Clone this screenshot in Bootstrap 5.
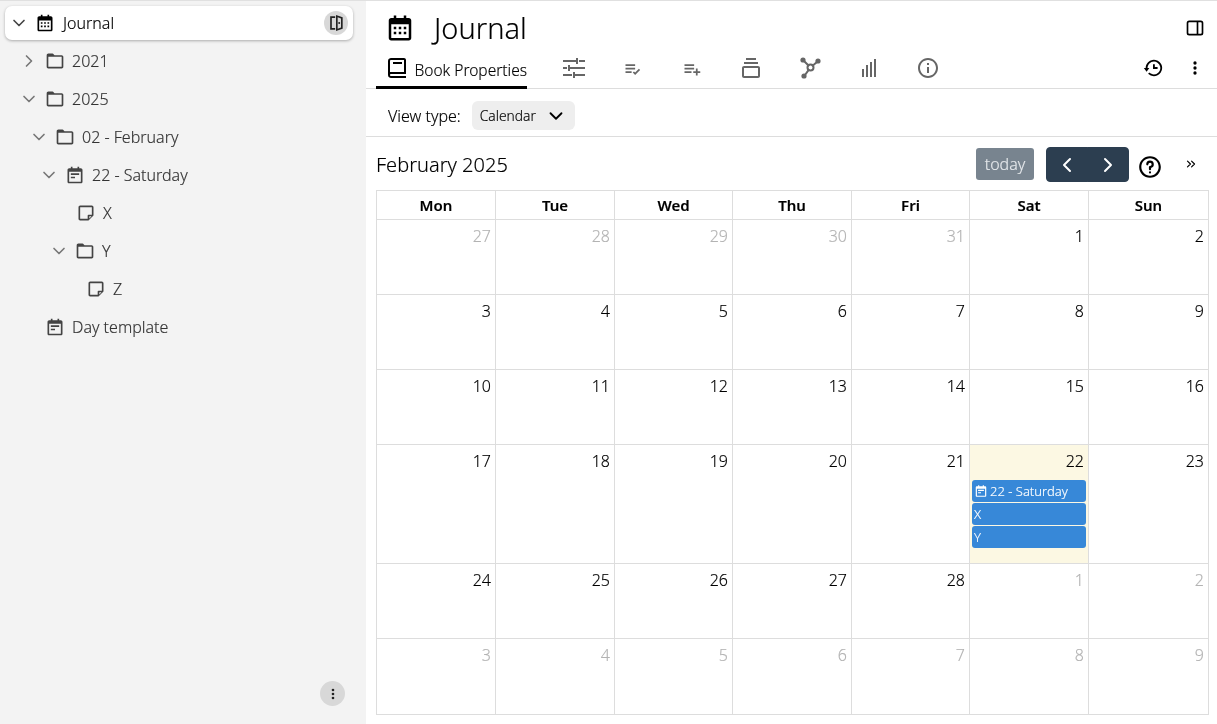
<!DOCTYPE html>
<html lang="en">
<head>
    <meta charset="UTF-8">
    <meta name="viewport" content="width=device-width, initial-scale=1.0">
    <title>Journal</title>
    <link href="https://cdn.jsdelivr.net/npm/bootstrap@5.3.0/dist/css/bootstrap.min.css" rel="stylesheet">
    <style>
        html, body { height: 100%; }
        body {
            font-family: "Noto Sans", sans-serif;
            font-size: 16px;
            font-weight: 300;
            -webkit-text-stroke: .15px;
            color: #000;
            overflow: hidden;
            border-top: 1px solid #e0e0e0;
        }
        .app-shell { will-change: transform; }
        .ico { fill: currentColor; flex: none; display: block; }
        .ico-line { fill: none; stroke: currentColor; stroke-width: 2; stroke-linecap: round; stroke-linejoin: round; }

        /* left tree */
        .side-pane { position: relative; width: 366px; flex: none; background: #f3f3f3; color: #333; padding: 5px 13px 0 5px; }
        .tree-row { height: 38px; }
        .tree-row .ico-chevron { width: 20px; height: 20px; color: #777; }
        .tree-row .ico-node { width: 20px; height: 20px; margin: 0 7px 0 0; color: #444; }
        .tree-root {
            height: 34px; margin-bottom: 2px; background: #fff; color: #000; border-radius: 7px;
            box-shadow: 0 1px 3px rgba(0, 0, 0, .3); padding: 0 5px 0 4px;
        }
        .tree-root .ico-node { width: 20px; height: 20px; margin: 0 8px 0 6px; color: #000; }
        .tree-root .ico-chevron { color: #444; }
        .lvl-1 { padding-left: 14px; }
        .lvl-2 { padding-left: 24px; }
        .lvl-3 { padding-left: 34px; }
        .lvl-4 { padding-left: 44px; }
        .lvl-1 .ico-chevron, .lvl-2 .ico-chevron, .lvl-3 .ico-chevron, .lvl-4 .ico-chevron { margin-right: 6px; }
        .leaf-4 { padding-left: 71px; }
        .leaf-5 { padding-left: 81px; }
        .tmpl-row { padding-left: 40px; }
        .round-btn { width: 24px; height: 24px; border-radius: 50%; background: #d8d8d8; color: #222; }
        .pane-foot { width: 25px; height: 25px; bottom: 18px; right: 21px; }

        /* right side */
        .title-row { height: 47px; padding: 6px 12px 0 19px; }
        .page-title { font-size: 29px; line-height: 1; margin: 0 0 0 19px; font-weight: 300; }
        .tab-row { height: 41px; border-bottom: 1px solid #ddd; padding: 0 12px 0 10px; color: #666; }
        .tab-on {
            height: 41px; color: #000; border-bottom: 3px solid #000; margin-bottom: -1px;
            width: 151px; gap: 6px; justify-content: flex-end; margin-right: 17px;
        }
        .tab-on .ico { margin-top: 2px; }
        .tab-label { margin-top: 7px; font-size: 15.5px; }
        .tab-ico { width: 59px; justify-content: center; }
        .tab-tools { gap: 21px; }
        .prop-row { height: 48px; border-bottom: 1px solid #ddd; padding: 6px 0 0 22px; }
        .view-pick {
            margin-left: 11px; height: 29px; width: 103px; background: #eee; border-radius: 6px;
            font-size: 13.8px; padding: 0 8px;
        }
        .view-pick span { margin-top: 2px; }
        .cal-wrap { padding: 0 8px 0 10px; }
        .cal-bar { height: 53px; }
        .cal-title { font-size: 20px; margin: 2px 0 0; font-weight: 300; }
        .btn-today {
            width: 58px; height: 32px; padding: 0; background: #78848f; border: 0; color: #e6e9ec;
            font-size: 16px; font-weight: 300; border-radius: 3px; margin-right: 12px;
        }
        .nav-pair { margin-top: 2px; }
        .btn-nav { background: #2c3e50; border-color: #2c3e50; color: #fff; width: 42px; height: 35px; padding: 0; --bs-btn-border-radius: 4px; }
        .help-ico { margin: 6px 0 0 8px; }
        .more-ico { margin: 0 11px 0 21px; }
        .cal-grid { width: 833px; table-layout: fixed; border-collapse: collapse; font-size: 16px; }
        .cal-grid col.w-a { width: 119px; }
        .cal-grid col.w-b { width: 118px; }
        .cal-grid col.w-c { width: 120px; }
        .cal-grid th, .cal-grid td { border: 1px solid #ddd; }
        .cal-grid th { height: 29px; padding: 0; text-align: center; font-size: 15px; font-weight: 600; }
        .cal-grid td { height: 75px; padding: 4px 4px 0 2px; text-align: right; vertical-align: top; line-height: 24px; }
        .cal-grid td.off { color: #b3b3b3; }
        .cal-grid tr.tall td { height: 119px; }
        .cal-grid tr.last-week td { height: 76px; }
        .cal-grid td.today-cell { background: #fcf8e3; }
        .ev {
            display: flex; align-items: center; gap: 2px; height: 22px; margin: 1px -2px 0 0; padding-left: 2px;
            background: #3788d8; color: #fff; border-radius: 3px; font-size: 13px; text-align: left; line-height: 1;
        }
        .ev:first-of-type { margin-top: 7px; }
    </style>
</head>
<body>
    <svg width="0" height="0" class="position-absolute">
        <symbol id="i-down" viewBox="0 0 24 24"><path class="ico-line" d="M6 9l6 6 6-6"/></symbol>
        <symbol id="i-right" viewBox="0 0 24 24"><path class="ico-line" d="M9 6l6 6-6 6"/></symbol>
        <symbol id="i-folder" viewBox="0 0 24 24"><path d="M20 5h-8.586L9.707 3.293A.996.996 0 0 0 9 3H4c-1.103 0-2 .897-2 2v14c0 1.103.897 2 2 2h16c1.103 0 2-.897 2-2V7c0-1.103-.897-2-2-2zM4 19V7h16l.002 12H4z"/></symbol>
        <symbol id="i-cal" viewBox="0 0 24 24"><path d="M21 20V6c0-1.103-.897-2-2-2h-2V2h-2v2H9V2H7v2H5c-1.103 0-2 .897-2 2v14c0 1.103.897 2 2 2h14c1.103 0 2-.897 2-2zM5 20V9h14v11H5z"/><path d="M7 11h2v2H7zm4 0h2v2h-2zm4 0h2v2h-2zm-8 4h2v2H7zm4 0h2v2h-2zm4 0h2v2h-2z"/></symbol>
        <symbol id="i-event" viewBox="0 0 24 24"><path d="M19 4h-2V2h-2v2H9V2H7v2H5c-1.103 0-2 .897-2 2v14c0 1.103.897 2 2 2h14c1.103 0 2-.897 2-2V6c0-1.103-.897-2-2-2zm.002 16H5V8h14l.002 12z"/><path d="M7 10h10v2H7zm0 4h5v2H7z"/></symbol>
        <symbol id="i-note" viewBox="0 0 24 24"><path d="M19 3H5c-1.103 0-2 .897-2 2v14c0 1.103.897 2 2 2h9.586c.266 0 .52-.105.707-.293l5.414-5.414A.996.996 0 0 0 21 14.586V5c0-1.103-.897-2-2-2zM5 5h14v9h-4c-.553 0-1 .447-1 1v4H5V5zm11 13.586V16h2.586L16 18.586z"/></symbol>
        <symbol id="i-door" viewBox="0 0 24 24"><path d="M11 4H5v16h6v-2H7V6h4z"/><path d="M12 2.500l8 2.500v14l-8 2.500V2.500zm2 2.700v13.600l4-1.300V6.500l-4-1.300z"/><circle cx="15.800" cy="12" r="1.200"/></symbol>
        <symbol id="i-book" viewBox="0 0 24 24"><path d="M6 22h15v-2H6.012C5.550 19.988 5 19.805 5 19s.550-.988 1.012-1H21V4c0-1.103-.897-2-2-2H6c-1.206 0-3 .799-3 3v14c0 2.201 1.794 3 3 3zM5 8V5c0-.805.550-.988 1-1h13v12H5V8z"/><path d="M8 6h9v2H8z"/></symbol>
        <symbol id="i-sliders" viewBox="0 0 24 24"><path d="M1 4h13v2H1zm16 0h6v2h-6zM14 2h2v6h-2zM1 11h4v2H1zm7 0h15v2H8zM6 9h2v6H6zm-5 9h9v2H1zm12 0h10v2H13zm-2-2h2v6h-2z"/></symbol>
        <symbol id="i-check" viewBox="0 0 24 24"><path d="M4 7h11v2H4zm0 4h11v2H4zm0 4h7v2H4zm15.299-2.708-4.300 4.291-1.292-1.291-1.414 1.415 2.706 2.704 5.712-5.703z"/></symbol>
        <symbol id="i-plus" viewBox="0 0 24 24"><path d="M19 15v-3h-2v3h-3v2h3v3h2v-3h3v-2zM4 7h11v2H4zm0 4h11v2H4zm0 4h8v2H4z"/></symbol>
        <symbol id="i-stack" viewBox="0 0 24 24"><path d="M19 10H5c-1.103 0-2 .897-2 2v8c0 1.103.897 2 2 2h14c1.103 0 2-.897 2-2v-8c0-1.103-.897-2-2-2zM5 20v-8h14l.002 8H5zM5 6h14v2H5zm2-4h10v2H7z"/></symbol>
        <symbol id="i-graph" viewBox="0 0 24 24"><circle cx="5" cy="4" r="2.600"/><circle cx="20" cy="5" r="2.600"/><circle cx="6" cy="20" r="2.600"/><circle class="ico-line" cx="12.500" cy="11.500" r="3"/><path class="ico-line" d="M6 5l4.500 4.500M19 6l-4.500 3.700M7 19l3.700-5.200"/></symbol>
        <symbol id="i-bars" viewBox="0 0 24 24"><path d="M5 13h2v8H5zm4-4h2v12H9zm4-3h2v15h-2zm4-3h2v18h-2z"/></symbol>
        <symbol id="i-info" viewBox="0 0 24 24"><path d="M12 2C6.486 2 2 6.486 2 12s4.486 10 10 10 10-4.486 10-10S17.514 2 12 2zm0 18c-4.411 0-8-3.589-8-8s3.589-8 8-8 8 3.589 8 8-3.589 8-8 8z"/><path d="M11 11h2v6h-2zm0-4h2v2h-2z"/></symbol>
        <symbol id="i-help" viewBox="0 0 24 24"><path d="M12 2C6.486 2 2 6.486 2 12s4.486 10 10 10 10-4.486 10-10S17.514 2 12 2zm0 18c-4.411 0-8-3.589-8-8s3.589-8 8-8 8 3.589 8 8-3.589 8-8 8z"/><path d="M12 6a3.500 3.500 0 0 0-3.500 3.500 1 1 0 0 0 2 0A1.500 1.500 0 1 1 12 11a1 1 0 0 0-1 1v2a1 1 0 0 0 2 0v-1.160A3.490 3.490 0 0 0 12 6z"/><circle cx="12" cy="17" r="1"/></symbol>
        <symbol id="i-history" viewBox="0 0 24 24"><path d="M12 8v5h5v-2h-3V8z"/><path d="M21.292 8.497a8.957 8.957 0 0 0-1.928-2.862 9.004 9.004 0 0 0-4.550-2.452 9.090 9.090 0 0 0-3.626 0 8.965 8.965 0 0 0-4.552 2.453 9.048 9.048 0 0 0-1.928 2.860A8.963 8.963 0 0 0 4 12l.001.025H2L5 16l3-3.975H6.001L6 12a6.957 6.957 0 0 1 1.195-3.913 7.066 7.066 0 0 1 1.891-1.892 7.034 7.034 0 0 1 2.503-1.054 7.003 7.003 0 0 1 8.269 5.445 7.117 7.117 0 0 1 0 2.824 6.936 6.936 0 0 1-1.054 2.503c-.250.371-.537.720-.854 1.036a7.058 7.058 0 0 1-2.225 1.501 6.980 6.980 0 0 1-1.313.408 7.117 7.117 0 0 1-2.823 0 6.957 6.957 0 0 1-2.501-1.053 7.066 7.066 0 0 1-1.037-.855l-1.414 1.414A8.985 8.985 0 0 0 13 21a9.050 9.050 0 0 0 3.503-.707 9.009 9.009 0 0 0 3.959-3.260A8.968 8.968 0 0 0 22 12a8.928 8.928 0 0 0-.708-3.503z"/></symbol>
        <symbol id="i-dots" viewBox="0 0 24 24"><circle cx="12" cy="6" r="2"/><circle cx="12" cy="12" r="2"/><circle cx="12" cy="18" r="2"/></symbol>
        <symbol id="i-panel" viewBox="0 0 24 24"><path class="ico-line" d="M5 4h14a2 2 0 0 1 2 2v12a2 2 0 0 1-2 2H5a2 2 0 0 1-2-2V6a2 2 0 0 1 2-2zM15 4v16"/></symbol>
        <symbol id="i-more" viewBox="0 0 24 24"><path class="ico-line" d="M6 7l5 5-5 5M13 7l5 5-5 5"/></symbol>
    </svg>

    <div class="app-shell d-flex h-100">
        <aside class="side-pane">
            <div class="tree-root d-flex align-items-center">
                <svg class="ico ico-chevron" width="20" height="20"><use href="#i-down"/></svg>
                <svg class="ico ico-node" width="20" height="20"><use href="#i-cal"/></svg>
                <span class="flex-grow-1">Journal</span>
                <span class="round-btn d-flex align-items-center justify-content-center"><svg class="ico" width="20" height="20"><use href="#i-door"/></svg></span>
            </div>
            <div class="tree-row d-flex align-items-center lvl-1"><svg class="ico ico-chevron" width="20" height="20"><use href="#i-right"/></svg><svg class="ico ico-node" width="20" height="20"><use href="#i-folder"/></svg><span>2021</span></div>
            <div class="tree-row d-flex align-items-center lvl-1"><svg class="ico ico-chevron" width="20" height="20"><use href="#i-down"/></svg><svg class="ico ico-node" width="20" height="20"><use href="#i-folder"/></svg><span>2025</span></div>
            <div class="tree-row d-flex align-items-center lvl-2"><svg class="ico ico-chevron" width="20" height="20"><use href="#i-down"/></svg><svg class="ico ico-node" width="20" height="20"><use href="#i-folder"/></svg><span>02 - February</span></div>
            <div class="tree-row d-flex align-items-center lvl-3"><svg class="ico ico-chevron" width="20" height="20"><use href="#i-down"/></svg><svg class="ico ico-node" width="20" height="20"><use href="#i-event"/></svg><span>22 - Saturday</span></div>
            <div class="tree-row d-flex align-items-center leaf-4"><svg class="ico ico-node" width="20" height="20"><use href="#i-note"/></svg><span>X</span></div>
            <div class="tree-row d-flex align-items-center lvl-4"><svg class="ico ico-chevron" width="20" height="20"><use href="#i-down"/></svg><svg class="ico ico-node" width="20" height="20"><use href="#i-folder"/></svg><span>Y</span></div>
            <div class="tree-row d-flex align-items-center leaf-5"><svg class="ico ico-node" width="20" height="20"><use href="#i-note"/></svg><span>Z</span></div>
            <div class="tree-row d-flex align-items-center tmpl-row"><svg class="ico ico-node" width="20" height="20"><use href="#i-event"/></svg><span>Day template</span></div>
            <span class="round-btn pane-foot position-absolute d-flex align-items-center justify-content-center"><svg class="ico" width="16" height="16"><use href="#i-dots"/></svg></span>
        </aside>

        <main class="flex-grow-1 d-flex flex-column">
            <div class="title-row d-flex align-items-center">
                <svg class="ico" width="30" height="30"><use href="#i-cal"/></svg>
                <h1 class="page-title flex-grow-1">Journal</h1>
                <svg class="ico" width="20" height="20"><use href="#i-panel"/></svg>
            </div>
            <div class="tab-row d-flex align-items-center">
                <div class="tab-on d-flex align-items-center"><svg class="ico" width="24" height="24"><use href="#i-book"/></svg><span class="tab-label">Book Properties</span></div>
                <div class="tab-ico d-flex"><svg class="ico" width="24" height="24"><use href="#i-sliders"/></svg></div>
                <div class="tab-ico d-flex"><svg class="ico" width="21" height="21"><use href="#i-check"/></svg></div>
                <div class="tab-ico d-flex"><svg class="ico" width="21" height="21"><use href="#i-plus"/></svg></div>
                <div class="tab-ico d-flex"><svg class="ico" width="24" height="24"><use href="#i-stack"/></svg></div>
                <div class="tab-ico d-flex"><svg class="ico" width="24" height="24"><use href="#i-graph"/></svg></div>
                <div class="tab-ico d-flex"><svg class="ico" width="24" height="24"><use href="#i-bars"/></svg></div>
                <div class="tab-ico d-flex"><svg class="ico" width="24" height="24"><use href="#i-info"/></svg></div>
                <div class="tab-tools ms-auto d-flex align-items-center text-black">
                    <svg class="ico" width="22" height="22"><use href="#i-history"/></svg>
                    <svg class="ico" width="20" height="20"><use href="#i-dots"/></svg>
                </div>
            </div>
            <div class="prop-row d-flex align-items-center">
                <span>View type:</span>
                <div class="view-pick d-flex align-items-center justify-content-between"><span>Calendar</span><svg class="ico" width="22" height="22"><use href="#i-down"/></svg></div>
            </div>
            <div class="cal-wrap">
                <div class="cal-bar d-flex align-items-center">
                    <h2 class="cal-title flex-grow-1">February 2025</h2>
                    <button class="btn btn-today" type="button">today</button>
                    <div class="btn-group nav-pair">
                        <button class="btn btn-nav d-flex align-items-center justify-content-center" type="button" aria-label="prev"><svg class="ico" width="22" height="22"><path class="ico-line" d="M14 5l-6 6 6 6"/></svg></button>
                        <button class="btn btn-nav d-flex align-items-center justify-content-center" type="button" aria-label="next"><svg class="ico" width="22" height="22"><path class="ico-line" d="M8 5l6 6-6 6"/></svg></button>
                    </div>
                    <svg class="ico help-ico" width="26" height="26"><use href="#i-help"/></svg>
                    <svg class="ico more-ico" width="14" height="14"><use href="#i-more"/></svg>
                </div>
                <table class="cal-grid">
                    <colgroup><col class="w-a"><col class="w-a"><col class="w-b"><col class="w-a"><col class="w-b"><col class="w-a"><col class="w-c"></colgroup>
                    <thead><tr><th>Mon</th><th>Tue</th><th>Wed</th><th>Thu</th><th>Fri</th><th>Sat</th><th>Sun</th></tr></thead>
                    <tbody>
                        <tr><td class="off">27</td><td class="off">28</td><td class="off">29</td><td class="off">30</td><td class="off">31</td><td>1</td><td>2</td></tr>
                        <tr><td>3</td><td>4</td><td>5</td><td>6</td><td>7</td><td>8</td><td>9</td></tr>
                        <tr><td>10</td><td>11</td><td>12</td><td>13</td><td>14</td><td>15</td><td>16</td></tr>
                        <tr class="tall"><td>17</td><td>18</td><td>19</td><td>20</td><td>21</td>
                            <td class="today-cell">22
                                <div class="ev"><svg class="ico" width="14" height="14"><use href="#i-event"/></svg><span>22 - Saturday</span></div>
                                <div class="ev">X</div>
                                <div class="ev">Y</div>
                            </td><td>23</td></tr>
                        <tr><td>24</td><td>25</td><td>26</td><td>27</td><td>28</td><td class="off">1</td><td class="off">2</td></tr>
                        <tr class="last-week"><td class="off">3</td><td class="off">4</td><td class="off">5</td><td class="off">6</td><td class="off">7</td><td class="off">8</td><td class="off">9</td></tr>
                    </tbody>
                </table>
            </div>
        </main>
    </div>

    <script src="https://cdn.jsdelivr.net/npm/bootstrap@5.3.0/dist/js/bootstrap.bundle.min.js"></script>
</body>
</html>
